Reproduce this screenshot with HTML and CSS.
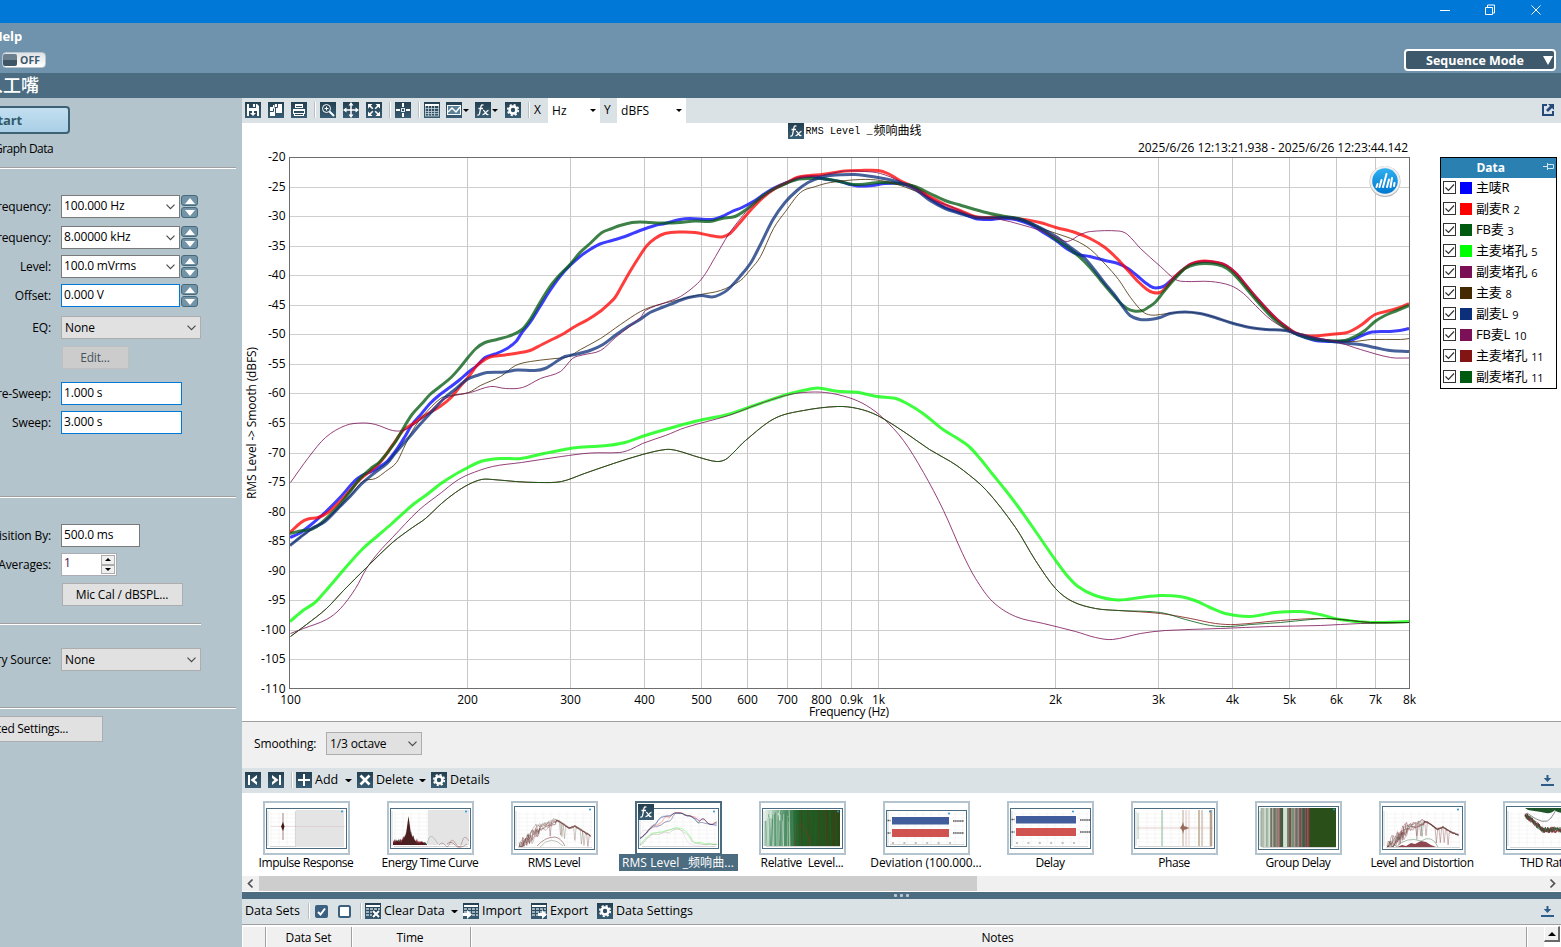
FILE: index.html
```html
<!DOCTYPE html>
<html lang="en">
<head>
<meta charset="utf-8">
<title>Sequence Mode</title>
<link rel="stylesheet" href="styles.css">
</head>
<body>
<svg class="defs" width="0" height="0">
  <defs>
    <linearGradient id="tile" x1="0" y1="0" x2="0" y2="1"><stop offset="0" stop-color="#233f50"/><stop offset="1" stop-color="#385d74"/></linearGradient>
    <linearGradient id="badge" x1="0" y1="0" x2="0" y2="1"><stop offset="0" stop-color="#2fb0f0"/><stop offset="1" stop-color="#0078d0"/></linearGradient>
    <linearGradient id="fade" x1="0" y1="0" x2="1" y2="0"><stop offset="0" stop-color="#dfeee4"/><stop offset=".25" stop-color="#5d9a73"/><stop offset=".45" stop-color="#22612a"/><stop offset="1" stop-color="#274a14"/></linearGradient>
    <symbol id="save" viewBox="0 0 16 16"><rect width="16" height="16" fill="url(#tile)"/><path d="M2 2h10l2 2v10H2z" fill="#fff"/><path d="M4 2h7v4H4zM4 9h8v5H4z" fill="#2b495c"/><path d="M8 2h2v3H8zM7 8h2v3h2l-3 3-3-3h2z" fill="#fff"/></symbol>
    <symbol id="copy" viewBox="0 0 16 16"><rect width="16" height="16" fill="url(#tile)"/><path d="M7 2h7v9H8V6H6zM2 5h3V3h1v3h1v8H2z" fill="#fff"/><path d="M9.500 2v3.500H6.500M5.500 6.500v3H2" fill="none" stroke="#2b495c"/></symbol>
    <symbol id="print" viewBox="0 0 16 16"><rect width="16" height="16" fill="url(#tile)"/><path d="M4 2h8v4H4zM2 7h12v5h-1v-2H3v2H2zM3 11h10v3H3z" fill="#fff"/><path d="M5 4.500h6M3 9.500h10M4 12.500h8" stroke="#2b495c"/></symbol>
    <symbol id="zoomin" viewBox="0 0 16 16"><rect width="16" height="16" fill="url(#tile)"/><g fill="none" stroke="#fff"><circle cx="6.500" cy="6.500" r="4"/><path d="M4.500 6.500h4M6.500 4.500v4"/><path d="M9.500 9.500l4.500 4.500" stroke-width="2"/></g></symbol>
    <symbol id="move" viewBox="0 0 16 16"><rect width="16" height="16" fill="url(#tile)"/><path d="M8 3v10M3 8h10" stroke="#fff" stroke-width="1.500"/><path d="M8 0l2.500 3.500h-5zM8 16l2.500-3.500h-5zM0 8l3.500-2.500v5zM16 8l-3.500-2.500v5z" fill="#fff"/></symbol>
    <symbol id="fit" viewBox="0 0 16 16"><rect width="16" height="16" fill="url(#tile)"/><path d="M3 3l3.800 3.800M13 3l-3.800 3.800M3 13l3.800-3.800M13 13l-3.800-3.800" stroke="#fff" stroke-width="1.600"/><path d="M2 2h4.500L2 6.500zM14 2v4.500L9.500 2zM2 14V9.500L6.500 14zM14 14H9.500L14 9.500z" fill="#fff"/></symbol>
    <symbol id="cursor" viewBox="0 0 16 16"><rect width="16" height="16" fill="url(#tile)"/><path d="M8 1v4M8 11v4M1 8h4M11 8h4" stroke="#fff" stroke-width="2"/><rect x="6.500" y="6.500" width="3" height="3" fill="none" stroke="#dfe7ec"/></symbol>
    <symbol id="grid" viewBox="0 0 16 16"><rect width="16" height="16" fill="url(#tile)"/><rect x="1" y="2" width="14" height="2" fill="#fff"/><path d="M1.500 4v10M4.500 4v10M7.500 4v10M10.500 4v10M14.500 4v10M1 6.500h14M1 9.500h14M1 11.500h14M1 14h14" stroke="#c5d0d6" stroke-width=".8"/></symbol>
    <symbol id="graph" viewBox="0 0 16 16"><rect width="16" height="16" fill="url(#tile)"/><rect x="1.500" y="3.500" width="13" height="9" fill="#5a8198" stroke="#fff"/><path d="M2 10l4-4 4 4 4-5" fill="none" stroke="#fff" stroke-width="1.500"/></symbol>
    <symbol id="fx" viewBox="0 0 16 16"><rect width="16" height="16" fill="url(#tile)"/><path d="M8.500 3.200c-1.600-.9-2.400.1-2.700 1.800L4.700 11c-.3 1.800-1.100 2.400-2.300 1.900M3.500 6.500h4.500" fill="none" stroke="#fff" stroke-width="1.300"/><path d="M8 8.500c2-.8 2 5 5.500 4M13.500 8.300c-2 0-3.500 4.500-6 4.300" fill="none" stroke="#fff" stroke-width="1.200"/></symbol>
    <symbol id="gear" viewBox="0 0 16 16"><rect width="16" height="16" fill="url(#tile)"/><circle cx="8" cy="8" r="3.500" fill="none" stroke="#fff" stroke-width="2.600"/><circle cx="8" cy="8" r="5.300" fill="none" stroke="#fff" stroke-width="1.700" stroke-dasharray="2.150 2.012"/></symbol>
    <symbol id="first" viewBox="0 0 16 16"><rect width="16" height="16" fill="url(#tile)"/><path d="M3 3h2v10H3zM12 3v10L5.500 8z" fill="#fff"/><path d="M12 6v4L9.500 8z" fill="#2c4b5e"/></symbol>
    <symbol id="last" viewBox="0 0 16 16"><rect width="16" height="16" fill="url(#tile)"/><path d="M11 3h2v10h-2zM4 3v10l6.500-5z" fill="#fff"/><path d="M4 6v4l2.500-2z" fill="#2c4b5e"/></symbol>
    <symbol id="plus" viewBox="0 0 16 16"><rect width="16" height="16" fill="url(#tile)"/><path d="M8 2v12M2 8h12" stroke="#fff" stroke-width="2"/></symbol>
    <symbol id="cross" viewBox="0 0 16 16"><rect width="16" height="16" fill="url(#tile)"/><path d="M3.500 3.500l9 9M12.500 3.500l-9 9" stroke="#fff" stroke-width="2.600"/></symbol>
    <symbol id="sheet" viewBox="0 0 16 16"><rect width="16" height="16" fill="url(#tile)"/><rect x="1" y="2" width="14" height="2" fill="#fff"/><path d="M1 5h3v2H1zM5 5h3v2H5zM9 5h3v2H9zM13 5h2v2h-2zM1 8h3v2H1zM5 8h3v2H5zM9 8h3v2H9zM13 8h2v2h-2zM1 11h3v2H1zM5 11h3v2H5zM9 11h3v2H9zM13 11h2v2h-2z" fill="#9fb2bd"/></symbol>
    <symbol id="clear" viewBox="0 0 16 16"><use href="#sheet"/><path d="M7 7h8v8H7z" fill="#2b495c"/><path d="M8 8l6 6M14 8l-6 6" stroke="#fff" stroke-width="2"/></symbol>
    <symbol id="import" viewBox="0 0 16 16"><use href="#sheet"/><path d="M0 10h4V7l5 4.500L4 16v-3H0z" fill="#fff"/></symbol>
    <symbol id="export" viewBox="0 0 16 16"><use href="#sheet"/><path d="M7 10h4V7l5 4.500-5 4.500v-3H7z" fill="#fff"/></symbol>
    <symbol id="dock" viewBox="0 0 13 11"><path d="M0 9h13v2H0zM5.500 0h2v3h2.800L6.500 7 2.700 3h2.800z" fill="#2f5d8a"/></symbol>
    <symbol id="chev" viewBox="0 0 9 6"><path d="M.5.700l4 4 4-4" fill="none" stroke="#4a4a4a" stroke-width="1.200"/></symbol>
    <symbol id="tick" viewBox="0 0 13 13"><rect x=".5" y=".5" width="12" height="12" fill="#fff" stroke="#333"/><path d="M2.500 6.500L5.500 9.500l5.500-6" fill="none" stroke="#333" stroke-width="1.200"/></symbol>
  </defs>
</svg>

<header class="titlebar">
  <svg width="110" height="22" viewBox="0 0 110 22" fill="none" stroke="#fff"><path d="M5 10.500h10M50.500 7.500h7v7h-7zM52.500 7v-2h7v8h-2M96.500 5.500l9 9M105.500 5.500l-9 9"/></svg>
</header>
<div class="menuband">
  <div class="menu-left">
    <div class="menu-item">Help</div>
    <div class="switch"><span class="knob"></span><b>OFF</b></div>
  </div>
  <div class="mode"><b>Sequence Mode</b><span class="mode-arrow"></span></div>
</div>
<div class="pathband"><span>人工嘴</span></div>

<main class="main">
  <aside class="side">
    <div class="start"><span>Start</span></div>
    <div class="graphdata"><span>Graph Data</span></div>
    <div class="sep"></div>
    <div class="row r-first"><label>requency:</label><div class="field combo gray">100.000 Hz<svg width="9" height="6"><use href="#chev"/></svg></div><div class="spin"><i></i><i class="dn"></i></div></div>
    <div class="row r8"><label>requency:</label><div class="field combo gray">8.00000 kHz<svg width="9" height="6"><use href="#chev"/></svg></div><div class="spin"><i></i><i class="dn"></i></div></div>
    <div class="row"><label>Level:</label><div class="field combo gray">100.0 mVrms<svg width="9" height="6"><use href="#chev"/></svg></div><div class="spin"><i></i><i class="dn"></i></div></div>
    <div class="row"><label>Offset:</label><div class="field combo">0.000 V</div><div class="spin"><i></i><i class="dn"></i></div></div>
    <div class="row r9"><label>EQ:</label><div class="drop">None<svg width="9" height="6"><use href="#chev"/></svg></div></div>
    <div class="row r7"><label></label><div class="btn edit">Edit...</div></div>
    <div class="row r13"><label>re-Sweep:</label><div class="field plain">1.000 s</div></div>
    <div class="row"><label>Sweep:</label><div class="field plain">3.000 s</div></div>
    <div class="sep s63"></div>
    <div class="row r26"><label>isition By:</label><div class="field small gray">500.0 ms</div></div>
    <div class="row"><label>Averages:</label><div class="field num">1<div class="updown"><i></i><i class="dn"></i></div></div></div>
    <div class="row r7"><label></label><div class="btn mic">Mic Cal / dBSPL...</div></div>
    <div class="sep s18 short"></div>
    <div class="row r23"><label>ry Source:</label><div class="drop">None<svg width="9" height="6"><use href="#chev"/></svg></div></div>
    <div class="sep s36"></div>
    <div class="advanced"><span>Advanced Settings...</span></div>
  </aside>

  <section class="content">
    <div class="toolbar top">
      <svg class="ic"><use href="#save"/></svg><svg class="ic g7"><use href="#copy"/></svg><svg class="ic g7"><use href="#print"/></svg>
      <i class="vsep g7"></i>
      <svg class="ic g4"><use href="#zoomin"/></svg><svg class="ic g7"><use href="#move"/></svg><svg class="ic g7"><use href="#fit"/></svg>
      <i class="vsep g7"></i>
      <svg class="ic g4"><use href="#cursor"/></svg>
      <i class="vsep g7"></i>
      <svg class="ic g4"><use href="#grid"/></svg><svg class="ic g6"><use href="#graph"/></svg><i class="arr"></i>
      <svg class="ic g6"><use href="#fx"/></svg><i class="arr"></i><svg class="ic g7"><use href="#gear"/></svg>
      <i class="vsep g7"></i>
      <span class="axis ax">X</span><div class="unit u1">Hz<i class="arr"></i></div><span class="axis ay">Y</span><div class="unit u2">dBFS<i class="arr"></i></div>
      <svg class="pop" width="12" height="12" viewBox="0 0 12 12"><path d="M5 1H1v10h10V7" fill="none" stroke="#24497a" stroke-width="2"/><path d="M6 0h6v6l-2-2-4 4-2-2 4-4z" fill="#24497a"/></svg>
    </div>

    <div class="chartpanel">
      <svg class="chart" width="1198" height="598" viewBox="242 123 1198 598">
        <use href="#fx" x="788" y="123" width="16" height="16"/>
        <text class="ctitle" x="805.500" y="134">RMS Level _</text><text class="cjk" x="873.500" y="134.500">频响曲线</text>
        <text x="1138" y="152" textLength="270">2025/6/26 12:13:21.938 - 2025/6/26 12:23:44.142</text>
        <g id="gridlines"></g>
        <g id="curves"></g>
        <rect x="289.500" y="157.500" width="1120" height="531" fill="none" stroke="#6e6e6e"/>
        <text transform="translate(256 499) rotate(-90)" textLength="152">RMS Level -&gt; Smooth (dBFS)</text>
        <text x="809" y="716" textLength="80">Frequency (Hz)</text>
        <circle cx="1385" cy="181.500" r="15.500" fill="#b5b5b5"/><circle cx="1385" cy="181" r="15" fill="#f0f0f0"/><circle cx="1385" cy="181" r="12.800" fill="url(#badge)"/>
        <path d="M1376.500 187l1-3M1379.500 187l2-7M1383 187l3.500-13M1387 187l2-7.500M1390.500 187l1.500-9M1394 186l.5-3" stroke="#fff" stroke-width="2" stroke-linecap="round"/>
      </svg>
      <div class="legend">
        <div class="legend-head"><b>Data</b><svg width="12" height="8" viewBox="0 0 12 8" fill="none" stroke="#cfe3f0"><path d="M0 3.500h4M4.500 0v7M4.500 1.500h6v4h-6"/></svg></div>
        <div class="lrow"><svg class="ck"><use href="#tick"/></svg><i class="sw c-blue"></i>主唛R</div>
        <div class="lrow"><svg class="ck"><use href="#tick"/></svg><i class="sw c-red"></i>副麦R<small>2</small></div>
        <div class="lrow"><svg class="ck"><use href="#tick"/></svg><i class="sw c-green"></i>FB麦<small>3</small></div>
        <div class="lrow"><svg class="ck"><use href="#tick"/></svg><i class="sw c-lime"></i>主麦堵孔<small>5</small></div>
        <div class="lrow"><svg class="ck"><use href="#tick"/></svg><i class="sw c-purple"></i>副麦堵孔<small>6</small></div>
        <div class="lrow"><svg class="ck"><use href="#tick"/></svg><i class="sw c-brown"></i>主麦<small>8</small></div>
        <div class="lrow"><svg class="ck"><use href="#tick"/></svg><i class="sw c-navy"></i>副麦L<small>9</small></div>
        <div class="lrow"><svg class="ck"><use href="#tick"/></svg><i class="sw c-purple"></i>FB麦L<small>10</small></div>
        <div class="lrow"><svg class="ck"><use href="#tick"/></svg><i class="sw c-maroon"></i>主麦堵孔<small>11</small></div>
        <div class="lrow"><svg class="ck"><use href="#tick"/></svg><i class="sw c-green"></i>副麦堵孔<small>11</small></div>
      </div>
    </div>

    <div class="smoothing"><span>Smoothing:</span><div class="drop oct">1/3 octave<svg width="9" height="6"><use href="#chev"/></svg></div></div>

    <div class="toolbar">
      <svg class="ic"><use href="#first"/></svg><svg class="ic g7"><use href="#last"/></svg><i class="vsep g7"></i>
      <svg class="ic g4"><use href="#plus"/></svg><span class="tl w-add">Add</span><i class="arr"></i>
      <svg class="ic g5"><use href="#cross"/></svg><span class="tl w-del">Delete</span><i class="arr"></i>
      <svg class="ic g5"><use href="#gear"/></svg><span class="tl">Details</span>
      <svg class="dock" width="13" height="11"><use href="#dock"/></svg>
    </div>

    <div class="gallery">
      <div class="thumb"><svg data-kind="impulse"></svg><span>Impulse Response</span></div>
      <div class="thumb"><svg data-kind="energy"></svg><span>Energy Time Curve</span></div>
      <div class="thumb"><svg data-kind="rms"></svg><span>RMS Level</span></div>
      <div class="thumb sel"><svg data-kind="smooth"></svg><span>RMS Level _频响曲...</span></div>
      <div class="thumb mid"><svg data-kind="relative"></svg><span>Relative&nbsp; Level...</span></div>
      <div class="thumb wide"><svg data-kind="deviation"></svg><span>Deviation (100.000...</span></div>
      <div class="thumb"><svg data-kind="delay"></svg><span>Delay</span></div>
      <div class="thumb"><svg data-kind="phase"></svg><span>Phase</span></div>
      <div class="thumb"><svg data-kind="group"></svg><span>Group Delay</span></div>
      <div class="thumb"><svg data-kind="distortion"></svg><span>Level and Distortion</span></div>
      <div class="thumb"><svg data-kind="thd"></svg><span>THD Ratio</span></div>
    </div>
    <div class="hscroll"><svg width="17" height="15"><path d="M10.500 3.500l-4 4 4 4" fill="none" stroke="#505050" stroke-width="1.700"/></svg><div class="hthumb"></div><svg class="right" width="17" height="15"><path d="M6.500 3.500l4 4-4 4" fill="none" stroke="#505050" stroke-width="1.700"/></svg></div>
    <div class="splitter"><i></i><i></i><i></i></div>

    <div class="toolbar data">
      <span class="tl ds">Data Sets</span><i class="vsep"></i>
      <svg class="cb" width="13" height="13"><rect width="13" height="13" rx="2" fill="#3c6080"/><path d="M3 7l2.500 2.500 4.500-6" fill="none" stroke="#fff" stroke-width="2"/></svg>
      <svg class="cb2" width="13" height="13"><rect x="1" y="1" width="11" height="11" rx="1.500" fill="#fff" stroke="#3c5f7c" stroke-width="2"/></svg>
      <i class="vsep g9"></i>
      <svg class="ic g4"><use href="#clear"/></svg><span class="tl w-clear">Clear Data</span><i class="arr"></i>
      <svg class="ic g5"><use href="#import"/></svg><span class="tl w-imp">Import</span>
      <svg class="ic"><use href="#export"/></svg><span class="tl w-exp">Export</span>
      <svg class="ic"><use href="#gear"/></svg><span class="tl">Data Settings</span>
      <svg class="dock" width="13" height="11"><use href="#dock"/></svg>
    </div>
    <div class="thead"><div class="th t0"></div><div class="th t1">Data Set</div><div class="th t2">Time</div><div class="th t3">Notes</div><div class="th t4"></div><div class="sbtn"><i></i></div></div>
  </section>
</main>
<script src="script.js"></script>
</body>
</html>
```
FILE: styles.css
```css
* { box-sizing: border-box; }
body { margin: 0; width: 1561px; height: 947px; overflow: hidden; display: flex; flex-direction: column; font: 12px/16px "Open Sans", "Noto Sans CJK SC", sans-serif; letter-spacing: -0.15px; color: #000; background: #fff; }
.defs { position: absolute; }
.titlebar { height: 23px; flex: none; background: #0078d7; display: flex; justify-content: flex-end; padding-right: 16px; }
.menuband { height: 50px; flex: none; background: #6f93ac; display: flex; justify-content: space-between; }
.menu-left { display: flex; flex-direction: column; }
.menu-item { width: 22px; height: 16px; margin-top: 5px; display: flex; justify-content: flex-end; overflow: hidden; color: #fff; font-weight: 700; font-size: 13px; }
.switch { width: 44px; height: 16px; margin: 8px 0 0 2px; border: 1px solid #b9c4cc; border-radius: 4px; background: linear-gradient(#dfe3e6, #fff); display: flex; align-items: center; color: #3d5a6c; font-size: 10.500px; }
.switch b { margin-left: 3px; letter-spacing: .1px; }
.knob { width: 14px; height: 12px; border-radius: 2px; background: linear-gradient(#6b7f8e 50%, #3e5565 50%); }
.mode { width: 152px; height: 22px; margin: 26px 5px 0 0; border: 2px solid #fff; border-radius: 4px; background: #3e596b; color: #fff; font-size: 12.500px; display: flex; align-items: center; justify-content: space-between; padding: 1px 1px 0 20px; letter-spacing: 0; }
.mode-arrow { border: 5px solid transparent; border-top: 9px solid #fff; border-bottom: 0; }
.pathband { height: 25px; flex: none; background: #4b6c81; color: #fff; }
.pathband span { display: flex; width: 39px; height: 25px; justify-content: flex-end; overflow: hidden; white-space: nowrap; font: 500 18px/22px "Noto Sans CJK SC", sans-serif; letter-spacing: 0; }
.main { flex: 1; display: flex; min-height: 0; }

.side { width: 242px; flex: none; background: #b4c4cd; overflow: hidden; }
.start { width: 70px; height: 28px; margin-top: 8px; border: 2px solid #3c6273; border-left: 0; border-radius: 0 4px 4px 0; background: linear-gradient(#c3dff0, #a9cfe6); color: #335a6b; font-weight: 700; font-size: 13px; }
.start span { display: flex; width: 22px; height: 24px; align-items: center; justify-content: flex-end; overflow: hidden; }
.graphdata { margin-top: 7px; height: 16px; letter-spacing: -.55px; }
.graphdata span, .advanced span { display: flex; width: 53px; overflow: hidden; justify-content: flex-end; white-space: nowrap; }
.sep { width: 236px; height: 2px; margin-top: 10px; background: #fff; border-top: 1px solid #a0a0a0; }
.sep.short { width: 201px; }
.sep.s18 { margin-top: 17px; } .sep.s36 { margin-top: 36px; } .sep.s63 { margin-top: 62px; }
.row { display: flex; height: 23px; margin-top: 6px; align-items: center; }
.row label { width: 51px; margin-right: 10px; flex: none; display: flex; justify-content: flex-end; overflow: hidden; white-space: nowrap; }
.r-first { margin-top: 26px; } .r8 { margin-top: 8px; } .r9 { margin-top: 9px; } .r7 { margin-top: 7px; } .r13 { margin-top: 13px; } .r26 { margin-top: 26px; } .r23 { margin-top: 23px; }
.field { height: 23px; border: 1px solid #0078d7; background: #fff; padding: 0 4px 2px 2px; display: flex; align-items: center; justify-content: space-between; }
.field.gray { border-color: #7a7a7a; }
.field svg { margin-top: 3px; }
.combo { width: 119px; } .plain { width: 121px; } .small { width: 79px; }
.num { width: 56px; border-color: #abadb3; padding: 1px 1px 0 2px; align-items: flex-start; color: #4a1050; }
.updown { width: 14px; height: 19px; display: flex; flex-direction: column; }
.updown i { flex: 1; border: 1px solid #adadad; background: #f0f0f0; display: flex; align-items: center; justify-content: center; }
.updown i::after { content: ""; border: 3px solid transparent; border-bottom-color: #000; border-top: 0; }
.updown .dn::after { border: 3px solid transparent; border-top-color: #000; border-bottom: 0; }
.spin { width: 17px; height: 23px; margin-left: 1px; display: flex; flex-direction: column; gap: 1px; }
.spin i { flex: 1; border: 1px solid #46697b; border-radius: 3px; background: #7393a7; display: flex; align-items: center; justify-content: center; }
.spin i::after { content: ""; border: 5px solid transparent; border-bottom: 6px solid #fff; border-top: 0; }
.spin .dn::after { border: 5px solid transparent; border-top: 6px solid #fff; border-bottom: 0; }
.drop { width: 140px; height: 23px; border: 1px solid #adadad; background: #e1e1e1; display: flex; align-items: center; justify-content: space-between; padding: 0 4px 0 3px; }
.btn { height: 23px; border: 1px solid #adadad; background: #e1e1e1; display: flex; align-items: center; justify-content: center; margin-left: 1px; padding-right: 1px; }
.edit { width: 67px; background: #ccc; border-color: #bfbfbf; color: #45545c; }
.mic { width: 121px; }
.advanced { width: 103px; height: 26px; margin-top: 7px; border: 1px solid #adadad; border-left: 0; background: #e1e1e1; padding-top: 4px; letter-spacing: -.3px; }
.advanced span { width: 68px; }

.content { flex: 1; min-width: 0; display: flex; flex-direction: column; }
.toolbar { height: 25px; flex: none; background: #dae2e6; display: flex; align-items: center; padding: 0 0 1px 3px; }
.ic { width: 16px; height: 16px; flex: none; }
.g4 { margin-left: 4px; } .g5 { margin-left: 5px; } .g6 { margin-left: 6px; } .g7 { margin-left: 7px; }
.vsep { width: 2px; height: 16px; flex: none; margin-left: 7px; margin-right: -1px; border-left: 1px solid #b9bfc3; background: #fff; }
.vsep.g9 { margin-left: 9px; }
.top .vsep { margin-right: 0; }
.arr { flex: none; width: 7px; border: 3px solid transparent; border-top-color: #000; border-bottom: 0; }
.top .arr { width: 6px; margin-left: 1px; }
.axis { font-size: 12px; }
.ax { width: 18px; padding-left: 4px; } .ay { width: 17px; padding-left: 4px; }
.unit { height: 25px; margin-bottom: -1px; background: #fff; padding: 0 4px; display: flex; align-items: center; justify-content: space-between; letter-spacing: .1px; }
.u1 { width: 52px; } .u2 { width: 69px; }
.pop { margin-left: auto; margin-right: 7px; }
.chartpanel { height: 598px; flex: none; display: flex; background: #fff; }
.chart { flex: none; font-size: 12px; letter-spacing: 0; }
.ctitle { font: 10px "Liberation Mono", monospace; letter-spacing: .1px; }
.chart .cjk { font: 12px "Noto Sans CJK SC", sans-serif; }
.legend { width: 117px; height: 232px; margin-top: 34px; border: 1px solid #000; background: #fff; }
.legend-head { height: 20px; background: #2a80b0; color: #fff; display: flex; align-items: center; justify-content: flex-end; gap: 38px; padding-right: 1px; }
.legend-head b { font-size: 12px; letter-spacing: 0; }
.legend-head svg { margin-bottom: 2px; }
.lrow { height: 21px; display: flex; align-items: center; padding: 0 0 2px 2px; font: 13px/19px "Open Sans", "Noto Sans CJK SC", sans-serif; letter-spacing: -.2px; }
.lrow small { font-size: 11px; margin: 2px 0 0 4px; }
.ck { width: 13px; height: 13px; } .sw { width: 12px; height: 12px; margin: 1px 4px 0; }
.c-blue { background: #00f; } .c-red { background: #f00; } .c-green { background: #005a10; } .c-lime { background: #0f0; } .c-purple { background: #7b1057; } .c-brown { background: #452a00; } .c-navy { background: #0c2f7a; } .c-maroon { background: #821414; }
.smoothing { height: 47px; flex: none; border-top: 1px solid #a0a0a0; background: #f0f0f0; display: flex; align-items: center; padding: 0 0 3px 12px; }
.smoothing span { width: 72px; }
.oct { width: 96px; }
.tl { padding-left: 3px; font-size: 12.500px; letter-spacing: 0; white-space: nowrap; }
.w-add { width: 33px; } .w-del { width: 46px; } .w-clear { width: 70px; } .w-imp { width: 52px; } .w-exp { width: 50px; }
.ds { padding-left: 0; width: 57px; }
.dock { margin-left: auto; margin-right: 7px; }
.cb { margin-left: 6px; } .cb2 { margin-left: 10px; }
.data .ds { width: 56px; }
.gallery { height: 83px; flex: none; display: flex; padding: 8px 0 0 2px; overflow: hidden; background: #fff; }
.thumb { width: 124px; flex: none; display: flex; flex-direction: column; align-items: center; letter-spacing: -.45px; }
.thumb.wide { letter-spacing: -.1px; }
.thumb.mid { letter-spacing: -.3px; }
.thumb svg { width: 87px; height: 54px; flex: none; }
.thumb span { white-space: nowrap; line-height: 15px; height: 17px; }
.sel span { width: 119px; background: #4b6c81; color: #fff; text-align: center; margin-top: -1px; letter-spacing: .1px; line-height: 17px; }
.hscroll { height: 15px; flex: none; background: #f0f0f0; display: flex; }
.hthumb { width: 718px; background: #cdcdcd; }
.right { margin-left: auto; }
.splitter { height: 7px; flex: none; margin-top: 1px; background: #4b6c81; display: flex; justify-content: center; align-items: center; gap: 3px; }
.splitter i { width: 3px; height: 3px; border-radius: 1px; background: #b9c9d3; }
.thead { height: 23px; flex: none; border-top: 1px solid #a0a0a0; display: flex; background: #fff; }
.th { margin-top: 2px; background: #f0f0f0; border-right: 1px solid #a0a0a0; text-align: center; padding-top: 3px; box-shadow: inset 1px 0 #fff; }
.t0 { width: 24px; } .t1 { width: 86px; } .t2 { width: 119px; padding-right: 2px; } .t3 { width: 1056px; padding-right: 2px; } .t4 { width: 17px; border: 0; }
.sbtn { width: 16px; height: 16px; margin-top: 1px; background: #f0f0f0; border: 1px solid #fff; border-right: 2px solid #696969; border-bottom: 2px solid #696969; display: flex; align-items: center; justify-content: center; }
.sbtn i { border: 4px solid transparent; border-bottom-color: #000; border-top: 0; }
```
FILE: script.js
```js
const NS = 'http://www.w3.org/2000/svg';
function add(parent, tag, attrs, text) {
  const el = document.createElementNS(NS, tag);
  for (const k in attrs) el.setAttribute(k, attrs[k]);
  if (text) el.textContent = text;
  parent.appendChild(el);
  return el;
}
function smooth(str) {
  const p = str.trim().split(/\s+/).map(s => s.split(',').map(Number));
  let d = 'M' + p[0];
  for (let i = 0; i < p.length - 1; i++) {
    const a = p[i - 1] || p[i], b = p[i], c = p[i + 1], e = p[i + 2] || c;
    const w = c[0] - b[0];
    const s1 = (c[1] - a[1]) / (c[0] - a[0]), s2 = (e[1] - b[1]) / (e[0] - b[0]);
    d += `C${b[0] + w / 3} ${b[1] + s1 * w / 3} ${c[0] - w / 3} ${c[1] - s2 * w / 3} ${c[0]} ${c[1]}`;
  }
  return d;
}

/* Axes */
const grid = document.getElementById('gridlines');
for (let i = 0; i <= 18; i++) {
  const y = 157 + i * 29.556;
  if (i && i < 18) add(grid, 'path', { d: `M290 ${Math.round(y) + .5}H1409`, stroke: '#cfcfcf' });
  add(grid, 'text', { x: 285.5, y: y + 4, 'text-anchor': 'end' }, String(-20 - 5 * i));
}
[[290, '100'], [467, '200'], [570, '300'], [644, '400'], [701, '500'], [747, '600'], [787, '700'], [821, '800'], [851, '0.9k'], [878, '1k'], [1055, '2k'], [1158, '3k'], [1232, '4k'], [1289, '5k'], [1336, '6k'], [1375, '7k'], [1409, '8k']].forEach(([x, t], i) => {
  if (i && i < 16) add(grid, 'path', { d: `M${x + .5} 158V688`, stroke: '#c9c9c9' });
  add(grid, 'text', { x: x + .5, y: 704, 'text-anchor': 'middle' }, t);
});

/* Curves, in axis pixel space */
const tailA = ' 1226,265 1236,273 1246,285 1257,298 1267,309 1277,319 1287,327 ';
const series = [
  ['#0000ff', 3, '290,537 299,533 310,525 325,512 340,497 355,480 362,475 369,472 375,469 387,461 396,450 405,436 412,424 420,415 430,403 440,394 451,386 460,379 468,372 477,365 485,357 495,353.5 507,348 516,341 522,332 530,322 540,306 550,290 560,276 570,265 580,256 590,249 600,243.5 612,240 625,236 640,230 655,225 665,223 680,219 690,218 712,219 722,216 732,211 742,207 755,200 765,193 775,187 787,182 800,177 815,176 822,178 840,181 850,184 858,185.500 872,185 885,183 900,183 915,187 930,198 945,207 960,212 975,218 990,219 1000,218 1015,219 1030,224 1045,233 1056,240 1068,249 1078,254 1090,256 1105,260 1118,263 1128,268 1138,276 1145,282 1153,287 1160,287 1165,285 1173,278 1182,270 1190,264 1197,262 1205,261 1215,262' + tailA + '1295,333 1305,337 1315,340 1335,341 1350,340 1362,335 1372,331.5 1390,331 1400,330 1409,328'],
  ['#ff0000', 3, '290,532 301,522 308,518.5 318,517 328,512 340,501 350,490 360,479 380,462 393,444 403,430 412,424 425,415 440,406 450,398 460,386 468,377 477,365 485,359 492,356 505,354.5 515,353 530,350 542,344 552,339 564,333 575,326 588,319 600,311 608,304 615,297 622,285 630,271 640,255 647,245 655,238 665,233 680,231.5 695,232 710,235 722,236.5 730,233 740,222 752,208 763,197 775,188 787,182 797,177 810,175 822,174 835,172 845,170.5 860,170 878,170 888,173 900,180 915,187 930,196 945,204 960,210 975,216 985,217 1000,216.5 1020,218.5 1040,222 1056,227 1075,232 1090,238 1105,247 1118,259 1128,270 1138,281 1147,289 1153,292 1160,292 1166,287 1175,276 1182,270 1190,264 1197,261.5 1205,260.5 1217,262' + tailA + '1295,332 1305,335 1315,335.5 1330,334 1345,332.5 1352,330 1362,324 1375,314 1390,310 1400,307 1409,303'],
  ['#005a10', 3, '290,533 300,530.5 312,528.5 322,522 340,504 350,491 360,478 372,467 380,461 395,442 405,425 412,414 422,403 430,394 440,386 451,377 460,367 468,357 476,348 485,342 497,339 512,334.5 522,329 530,319 540,302 550,286 560,274 570,264 580,252 590,243 602,232 612,228 620,225 632,222 640,221.5 650,222 665,222.5 680,222 695,220.5 710,221 722,218 735,216 745,210 755,202 765,194 775,188 787,182.5 797,179 810,178 822,178 840,181 850,183.5 860,184 880,182 900,183 915,186 930,193 945,200 960,204.5 975,209 990,213 1005,216 1020,218.5 1035,225 1045,231 1056,239 1068,247 1080,257 1090,267 1100,279 1110,291 1120,302 1127,308 1134,310.5 1143,310 1148,307 1155,302 1160,296 1168,286 1177,276 1185,268 1195,264 1205,263 1217,264 1227,268 1237,277 1248,290 1260,304 1272,317 1283,326 1295,333 1310,338 1325,340 1345,340 1355,336 1365,330 1375,321 1385,315 1397,310 1409,305'],
  ['#00ff00', 3, '290,621 303,610 315,602 326,590 338,576 350,562 363,548 378,535 392,523 412,505 427,494 441,483 455,474 468,467 478,462 487,459.5 500,458 521,458 544,453 570,448 584,446.5 607,445 625,442 645,435 676,426 699,420 728,414 757,404 787,394 803,390 818,387.5 837,390.7 857,391.7 877,396 895,397.7 907,403 923,413 943,429 956,437 969,446 980,458 992,473 1005,489 1018,506 1035,530 1055,559 1067,575 1078,586 1095,595 1118,599.500 1140,597 1160,595 1180,596 1195,600 1210,607 1225,613 1250,616 1275,612 1300,611 1320,614 1340,619 1370,622 1409,621'],
  ['#7b1057', 1, '290,633 303,628 326,619 340,608 355,588 366,568 378,552 392,537 418,510 441,492 455,481 468,474 492,466 521,462 561,456 590,452.5 619,452 630,449 642,443 665,435 685,427 728,415 757,404 785,395 803,392 825,392 848,397 866,405 883,418 903,440 923,472 943,510 962,553 975,578 992,601 1015,616 1043,623 1075,631 1095,637 1112,639 1140,633 1165,630 1220,628 1270,626 1320,625 1360,623 1409,622'],
  ['#452a00', 1, '290,544 312,528 325,520 350,495 362,481 375,478 385,471 396,462 403,448 412,430 422,416 440,398 450,395 468,392 480,385 500,376 515,365 530,361 550,358.5 568,356 580,349 600,338 620,324 640,311 655,305 675,300 700,294 720,290 740,280 750,269 760,256 773,228 785,211 800,192 815,186 830,182 860,179 880,180 900,185 920,193 945,207 975,216 1000,217 1020,219 1035,226 1056,233 1075,240 1090,249 1105,264 1118,279 1130,297 1142,311 1150,314.5 1160,314 1175,312 1185,311.5 1200,313 1215,317 1230,322 1250,327 1267,329 1285,330 1300,334 1320,339 1340,341 1355,341 1370,339 1400,339 1409,338'],
  ['#0c2f7a', 3, '290,545 300,537 312,528 325,521 340,506 350,496 362,483 375,472 387,463 395,453 408,438 420,424 432,411 444,398 455,389 467,379 477,375 487,372 505,371.5 517,369.5 535,370 545,368 555,362 565,356 575,354 590,350 603,344 615,335 628,326 640,319 650,312 662,307 675,302 685,298 694,296 702,295 712,296.5 720,294 728,289 740,276 751,262 760,245 773,219 785,202 797,190 808,182 820,177 830,175 855,174 878,177 893,180 905,184 917,190 930,200 945,208 960,213 975,217 990,217.5 1005,217 1020,219 1040,227 1056,236 1068,245 1085,258 1095,270 1105,283 1115,295 1122,305 1130,315 1140,319 1150,319 1160,317 1170,313 1185,311.5 1200,313 1215,317 1230,322 1250,327 1267,329 1285,330 1300,334 1320,339 1340,342 1360,344 1375,347 1390,350 1409,351'],
  ['#7b1057', 1, '290,482 308,457 325,437 345,425 362,422.5 375,424 392,430 402,430 412,425 425,415 440,401 450,396 470,392 490,386 505,388 522,387 540,378 560,371 572,358 582,354.5 600,350 615,337 640,317 645,310 665,302 680,296 697,283 705,273 715,256 728,234 740,218 752,204 775,188 797,178 820,175 845,170.5 865,171 880,173 900,181 930,198 950,206 975,216 1000,219 1020,224 1040,230 1056,237 1067,241 1080,234 1090,231 1118,230.5 1127,234 1140,248 1160,266 1175,279 1185,281 1210,281 1230,285 1243,293 1255,305 1270,319 1285,328 1300,334 1335,341 1360,349 1390,357 1409,357.5']
];
const low = '290,636 306,624 326,608 343,590 366,567 392,542 412,527 425,518 441,503 455,492 468,484 481,479 492,479 515,481 538,482 561,481 584,473 613,463 642,454 665,449 676,450 699,457 716,461 725,459 733,452 745,440 774,418 803,410 837,406 857,408 877,415 906,433 929,449 950,461 963,470 986,490 1015,527 1035,560 1055,588 1072,601 1095,608 ';
series.push(['#821414', 1, low + '1118,610 1160,613 1190,618 1215,623 1235,624 1280,620 1320,618 1350,620 1370,622 1409,622']);
series.push(['#005a10', 1, low + '1118,610 1160,612 1185,619 1210,625 1230,626 1250,624 1280,622 1310,619 1330,618 1350,620 1370,622 1409,622']);
const curves = document.getElementById('curves');
series.forEach(([c, w, pts]) => add(curves, 'path', {
  d: smooth(pts), fill: 'none', stroke: c, 'stroke-width': w, 'stroke-opacity': w === 1 ? .8 : .76,
  transform: w === 1 ? 'translate(.5 .5)' : 'translate(0 .5)', 'stroke-linejoin': 'round'
}));

/* Gallery previews */
let seed = 7;
const rnd = () => (seed = (seed * 16807) % 2147483647) / 2147483647;
const pick = a => a[Math.floor(rnd() * a.length)];
const tones = ['#6b1e28', '#2d5a35', '#7a3035', '#6a5a4a'];
function line(s, d, c, w, o) { add(s, 'path', { d, fill: 'none', stroke: c, 'stroke-width': w || .5, opacity: o || .7 }); }
function hump(s, peak, right) {
  const keys = [[8, 45], [14, 38], [22, 30], [28, 24], [36, 22], [43, peak], [50, peak + 3], [58, peak + 9], [64, peak + 7], [72, peak + 12], [80, right]];
  const env = x => {
    let i = 0;
    while (i < keys.length - 2 && x > keys[i + 1][0]) i++;
    const [x0, y0] = keys[i], [x1, y1] = keys[i + 1];
    return y0 + (y1 - y0) * (x - x0) / (x1 - x0);
  };
  for (let k = 0; k < 8; k++) {
    let d = '';
    const shift = x => x < 45 ? (k % 4) * 1.6 : 0;
    for (let x = 8; x <= 80; x += 1.3) {
      const amp = x < 28 ? 12 : x < 36 ? 4 : 1.8;
      const dip = x > 36 && rnd() > .975 ? 14 : 0;
      d += (d ? 'L' : 'M') + x + ' ' + Math.min(45.5, env(x) + shift(x) + (rnd() - .4) * amp + dip);
    }
    line(s, d, pick(tones), .5, .65);
  }
}
const draw = {
  impulse(s) {
    add(s, 'rect', { x: 33, y: 9, width: 48, height: 37, fill: '#e4e4e4' });
    line(s, 'M8 25.500H82', '#d8b0b0'); line(s, 'M20 12V39', '#5a2020', .8);
    add(s, 'path', { d: 'M18 25.500L20 21l1.500 4.500L20 30z', fill: '#431818' }); line(s, 'M32.500 10V45', '#999');
  },
  energy(s) {
    add(s, 'rect', { x: 41, y: 9, width: 41, height: 35, fill: '#e4e4e4' });
    for (let k = 0; k < 4; k++) {
      let d = 'M6 44';
      for (let x = 6; x < 40; x += 1) d += `L${x} ${44 - rnd() * (6 + 20 * Math.exp(-Math.abs(x - 21.500) / 3)) * (x > 30 ? .6 : 1)}`;
      add(s, 'path', { d: d + 'L40 44z', fill: pick(['#7c1822', '#193f24', '#52161c']), opacity: .8 });
    }
    add(s, 'path', { d: 'M14 44L19 33 21.500 15 24 33 30 44z', fill: '#4a2020' });
    line(s, 'M40 43C43 31 46 35 51 43', '#777'); line(s, 'M52 44Q55 40 58 44T63 42T69 43T75 41T82 40', '#875058', .6); line(s, 'M60 43Q64 39 68 44T80 43', '#8a3038', .6);
  },
  rms(s) { hump(s, 18, 35); line(s, 'M26 45Q34 36 44 36Q50 37 54 45', '#7a4545', .8); line(s, 'M29 46Q40 33 52 45', '#557a55', .6); },
  smooth(s) {
    const t = 'translate(-15 -.5) scale(.0687 .0705)';
    series.forEach(([c, w, pts]) => add(s, 'path', { d: smooth(pts), transform: t, fill: 'none', stroke: c, 'stroke-width': w === 3 ? 10 : 5, opacity: w === 3 ? .5 : .28 }));
  },
  relative(s) {
    add(s, 'rect', { x: 6, y: 9, width: 75, height: 36, fill: 'url(#fade)' });
    for (let i = 0; i < 90; i++) {
      const x = 6 + rnd() * 73;
      const c = x > 34 ? pick(['#6b2a18', '#235818', '#1b6a30']) : pick(['#ffffff', '#2f7d4c', '#e9f3ec', '#3c8456']);
      line(s, `M${x} ${x < 30 ? 9 + rnd() * 12 : 9}L${x + rnd() * 3 - 1.5} 45`, c, .4 + rnd() * .7, x > 34 ? .4 : .65);
    }
    line(s, 'M36 45Q38 17 43 24Q50 33 51 45', '#9b2d20', .7);
  },
  deviation(s) { bars(s, 67, 16); },
  delay(s) { bars(s, 70, 15); },
  phase(s) {
    line(s, 'M6 27H82', '#cf9a9a', .7); line(s, 'M7 12V38', '#79ad82', .8);
    [[31, '#9cc4a8', 1.5], [52, '#c8b7a6', 1.5], [55, '#d2b8b0', 1], [58, '#dcc4c0', 1], [68, '#c0ad96', 2], [71, '#c8b7a6', 1.5], [80, '#a58f75', 2.5]].forEach(([x, c, w]) => line(s, `M${x} 9V45`, c, w, .8));
    add(s, 'path', { d: 'M49 27l2-3 1-3 1 4 3 1 2 1-2 1-3 1-1 4-1-4z', fill: '#8a5a45', opacity: .85 });
  },
  group(s) {
    add(s, 'rect', { x: 6, y: 7, width: 75, height: 39, fill: '#d4dfd6' });
    add(s, 'rect', { x: 46, y: 7, width: 35, height: 39, fill: '#2a4f18' });
    for (let i = 0; i < 60; i++) { const x = 6 + rnd() * 48; line(s, `M${x} 7V46`, pick(['#7a3638', '#2c6540', '#26521f', '#8a7070']), .4 + x / 35, .4 + x / 110); }
  },
  distortion(s) {
    hump(s, 19, 34); add(s, 'path', { d: 'M18 46l5-2 4 1 5-3 4 1 6-3 5 1 5 3 5 2z', fill: '#7a2730', opacity: .85 });
    line(s, 'M17 46Q28 35 42 40Q53 33 59 46', '#4f7c56', .7);
  },
  thd(s) {
    for (let k = 0; k < 10; k++) {
      let d = ''; for (let x = 22; x < 82; x += 1.2) d += (d ? 'L' : 'M') + x + ' ' + (9 + Math.min(17, (x - 20) * .85) + rnd() * 6);
      line(s, d, pick(['#76202a', '#285a32', '#852838']), .8);
    }
    add(s, 'path', { d: 'M22 7H82V12Q55 14 52 9Q48 14 38 11L25 9z', fill: '#1f572a' });
    line(s, 'M24 12Q42 26 48 17T53 8', '#333', .8);
  }
};
function bars(s, right, top) {
  add(s, 'rect', { x: 9, y: top, width: right - 10, height: 7.500, fill: '#415d9c' });
  add(s, 'rect', { x: 9, y: top + 12, width: right - 10, height: 8, fill: '#d05350' });
  for (let x = 9; x <= 67; x += 11.400) line(s, `M${x} 42h2`, '#444', .9);
  add(s, 'path', { d: `M4.500 ${top + 3.500}h3M4.500 ${top + 16}h3M${right + 3} ${top + 4}h11M${right + 3} ${top + 16}h11`, stroke: '#555', 'stroke-width': 1.300, 'stroke-dasharray': '1.600 .5' });
}
document.querySelectorAll('[data-kind]').forEach(s => {
  const kind = s.dataset.kind, sel = kind === 'smooth';
  s.setAttribute('viewBox', '0 0 87 54');
  add(s, 'rect', { x: 1, y: 1, width: 85, height: 52, fill: '#fff', stroke: sel ? '#4b6c81' : '#b4c4ce', 'stroke-width': 2 });
  const bar = kind === 'deviation';
  const y = bar ? 9.500 : kind === 'rms' || kind === 'group' || kind === 'distortion' || kind === 'thd' ? 5.500 : 7.500;
  const h = bar ? 36 : y === 5.500 ? 43 : 40;
  add(s, 'rect', { x: 3.500, y, width: 80, height: h, fill: '#fff', stroke: '#4b6c81' });
  for (let x = 8; x < 82; x += 8) line(s, `M${x} 10V45`, '#ddd', .4);
  for (let yy = 13; yy < 45; yy += 4) line(s, `M7 ${yy}H81`, '#ddd', .4);
  line(s, 'M5 10V45M7 ' + (y + h - 2) + 'H81', '#999', .6);
  draw[kind](s);
  add(s, 'circle', { cx: bar || kind === 'delay' ? 66 : 79, cy: y + 3, r: 1, fill: '#2196e0' });
  if (sel) add(s, 'use', { href: '#fx', x: 3, y: 3, width: 16, height: 16 });
});
```
